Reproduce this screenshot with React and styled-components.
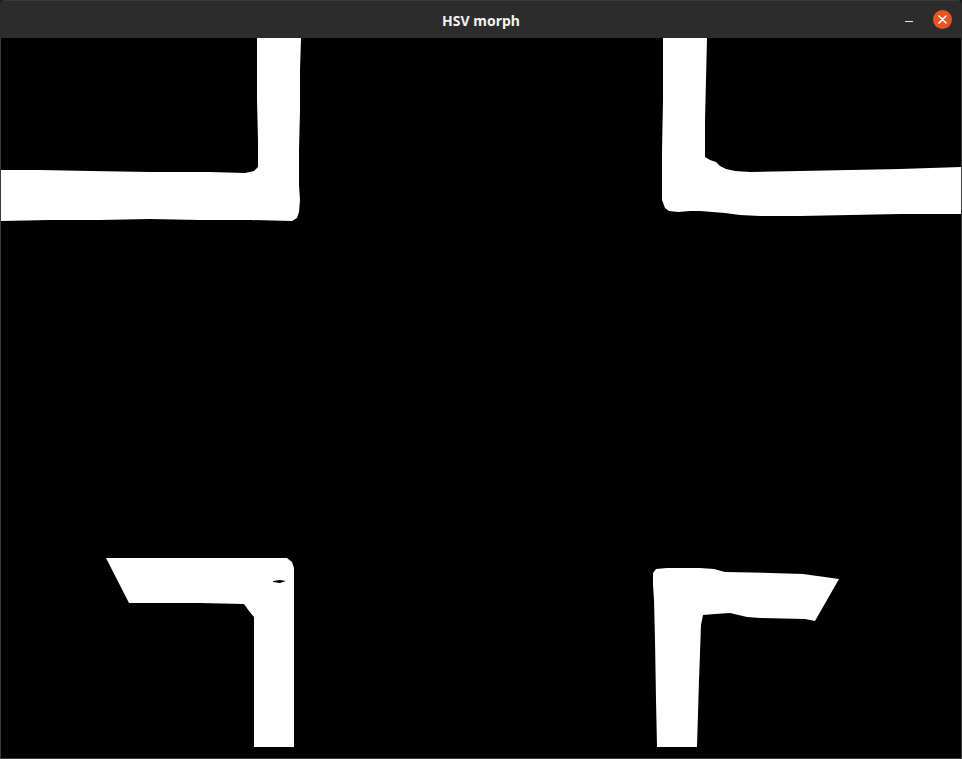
import React from "react";
import styled, { createGlobalStyle } from "styled-components";

const Global = createGlobalStyle`
  html, body { margin: 0; padding: 0; background: #1d1d1d; }
  #root { width: 962px; height: 759px; }
`;

const Window = styled.div`
  width: 962px;
  height: 759px;
  display: flex;
  flex-direction: column;
  background: #2c2c2c;
  border-radius: 5px 5px 0 0;
  overflow: hidden;
  box-sizing: border-box;
`;

const TitleBar = styled.header`
  height: 38px;
  flex: none;
  display: grid;
  grid-template-columns: 1fr auto 1fr;
  align-items: center;
  background: #2c2c2c;
  border-top: 1px solid #3a3a3a;
  box-sizing: border-box;
`;

const Title = styled.div`
  grid-column: 2;
  font-family: "Noto Sans", "DejaVu Sans", sans-serif;
  font-weight: 700;
  font-size: 14px;
  color: #f2f2f2;
  letter-spacing: 0;
  padding-top: 1px;
`;

const Controls = styled.div`
  grid-column: 3;
  display: flex;
  justify-content: flex-end;
  align-items: center;
  gap: 20px;
  padding-right: 10px;
`;

const MinButton = styled.div`
  width: 8px;
  height: 1px;
  background: #e6e6e6;
  margin-top: 3px;
`;

const CloseButton = styled.div`
  width: 19px;
  height: 19px;
  border-radius: 50%;
  background: #e95420;
  display: flex;
  align-items: center;
  justify-content: center;
`;

const Frame = styled.div`
  flex: none;
  width: 960px;
  height: 720px;
  border: 1px solid #3c3c3c;
  border-top: none;
  background: #000;
`;

const Canvas = styled.svg`
  display: block;
  width: 960px;
  height: 720px;
`;

// page coordinates -> canvas coordinates
const pts = (arr) => arr.map(([x, y]) => `${x - 1},${y - 38}`).join(" ");

const topLeft = [
  [0, 170], [40, 170], [90, 171], [150, 172], [210, 172], [245, 173], [254, 171], [258, 167],
  [258, 140], [257, 100], [257, 60], [257, 38], [301, 38],
  [300, 70], [300, 110], [299, 150], [299, 185], [300, 200], [299, 212], [297, 218], [292, 221],
  [250, 220], [200, 220], [150, 219], [100, 220], [50, 220], [0, 221],
];

const topRight = [
  [663, 38], [707, 38], [706, 80], [705, 120], [705, 157], [710, 160], [716, 162], [720, 166],
  [726, 169], [735, 171], [750, 172], [800, 171], [850, 170], [900, 169], [962, 167],
  [962, 214], [900, 214], [850, 215], [800, 216], [760, 216], [740, 215], [725, 213],
  [700, 211], [690, 211], [678, 212], [669, 211], [665, 208], [662, 200], [662, 150],
  [663, 100],
];

const bottomLeft = [
  [106, 558], [287, 558], [292, 562], [294, 568], [294, 747], [254, 747], [254, 617],
  [249, 611], [244, 604], [200, 603], [150, 603], [129, 603],
];

const bottomRight = [
  [653, 573], [656, 569], [667, 568], [700, 568], [714, 569], [725, 572],
  [770, 573], [803, 574], [839, 579], [815, 621], [805, 619], [760, 618], [747, 617],
  [730, 613], [715, 614], [703, 615], [701, 625], [699, 680], [697, 747], [657, 747],
  [656, 700], [655, 640], [654, 600], [653, 585],
];

export default function App() {
  return (
    <>
      <Global />
      <Window>
        <TitleBar>
          <Title>HSV morph</Title>
          <Controls>
            <MinButton />
            <CloseButton>
              <svg width="9" height="9" viewBox="0 0 9 9">
                <path d="M1 1 L8 8 M8 1 L1 8" stroke="#fff" strokeWidth="1.6" strokeLinecap="round" />
              </svg>
            </CloseButton>
          </Controls>
        </TitleBar>
        <Frame>
          <Canvas viewBox="0 0 960 720">
            <rect x="0" y="0" width="960" height="720" fill="#000" />
            <polygon points={pts(topLeft)} fill="#fff" />
            <polygon points={pts(topRight)} fill="#fff" />
            <polygon points={pts(bottomLeft)} fill="#fff" />
            <polygon points={pts(bottomRight)} fill="#fff" />
            <polygon points={pts([[273, 581], [280, 580], [286, 581], [280, 583], [273, 582]])} fill="#000" />
          </Canvas>
        </Frame>
      </Window>
    </>
  );
}
